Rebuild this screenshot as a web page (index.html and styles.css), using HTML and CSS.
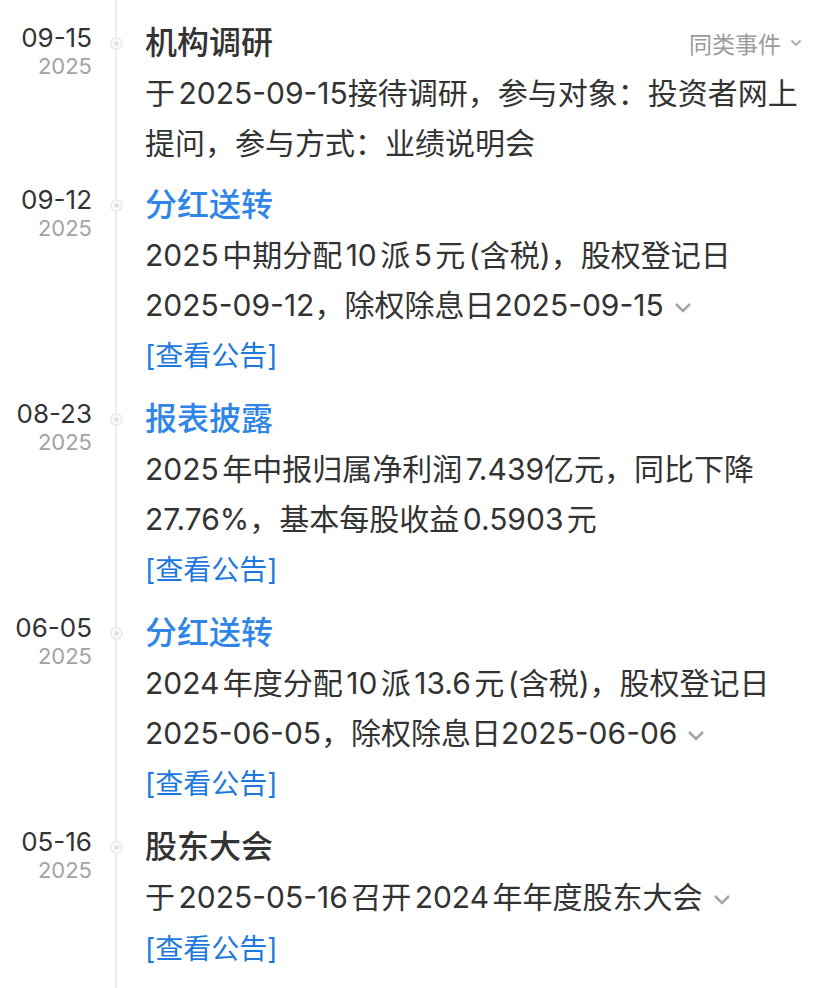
FILE: index.html
```html
<!DOCTYPE html>
<html lang="zh-CN">
<head>
  <meta charset="UTF-8" />
  <meta name="viewport" content="width=device-width, initial-scale=1.0"/>
  <title>大事提醒</title>
  <link rel="stylesheet" href="styles.css">
</head>
<body>

<div class="timeline">

  <div class="item">
    <div class="date"><div class="md">09-15</div><div class="yr">2025</div></div>
    <div class="axis"><span class="dot"></span></div>
    <div class="content">
      <div class="title-row">
        <div class="title">机构调研</div>
        <div class="filter">同类事件<svg class="chev-sm" viewBox="0 0 12 8"><path d="M1.5 1.5 L6 6 L10.5 1.5"/></svg></div>
      </div>
      <div class="desc">于 2025-09-15接待调研，参与对象：投资者网上提问，参与方式：业绩说明会</div>
    </div>
  </div>

  <div class="item">
    <div class="date"><div class="md">09-12</div><div class="yr">2025</div></div>
    <div class="axis"><span class="dot"></span></div>
    <div class="content">
      <div class="title blue">分红送转</div>
      <div class="desc">2025 中期分配 10 派 5 元 (含税)，股权登记日 2025-09-12，除权除息日2025-09-15<svg class="chev" viewBox="0 0 18 11"><path d="M2 2 L9 9 L16 2"/></svg></div>
      <a class="link" href="#">[查看公告]</a>
    </div>
  </div>

  <div class="item">
    <div class="date"><div class="md">08-23</div><div class="yr">2025</div></div>
    <div class="axis"><span class="dot"></span></div>
    <div class="content">
      <div class="title blue">报表披露</div>
      <div class="desc">2025 年中报归属净利润 7.439亿元，同比下降 27.76%，基本每股收益 0.5903 元</div>
      <a class="link" href="#">[查看公告]</a>
    </div>
  </div>

  <div class="item">
    <div class="date"><div class="md">06-05</div><div class="yr">2025</div></div>
    <div class="axis"><span class="dot"></span></div>
    <div class="content">
      <div class="title blue">分红送转</div>
      <div class="desc">2024 年度分配 10 派 13.6 元 (含税)，股权登记日 2025-06-05，除权除息日2025-06-06<svg class="chev" viewBox="0 0 18 11"><path d="M2 2 L9 9 L16 2"/></svg></div>
      <a class="link" href="#">[查看公告]</a>
    </div>
  </div>

  <div class="item">
    <div class="date"><div class="md">05-16</div><div class="yr">2025</div></div>
    <div class="axis"><span class="dot"></span></div>
    <div class="content">
      <div class="title">股东大会</div>
      <div class="desc">于 2025-05-16 召开 2024 年年度股东大会<svg class="chev" viewBox="0 0 18 11"><path d="M2 2 L9 9 L16 2"/></svg></div>
      <a class="link" href="#">[查看公告]</a>
    </div>
  </div>

</div>

</body>
</html>
```

FILE: styles.css
```css
* { box-sizing: border-box; }

body {
  margin: 0;
  background: #fff;
  font-family: Inter, "Noto Sans CJK SC", sans-serif;
  color: #333;
  overflow: hidden;
}

/* vertical axis line running the whole page */
.timeline {
  min-height: 988px;
  padding-top: 17px;
  background: linear-gradient(#ededed, #ededed) no-repeat 115px 0 / 2px 100%;
}

.item {
  display: flex;
  padding-bottom: 11px;
}

.date {
  width: 92px;
  flex-shrink: 0;
  text-align: right;
  padding-top: 6px;
}

.md {
  font-size: 26px;
  line-height: 30px;
  color: #333;
}

.yr {
  font-size: 22px;
  line-height: 26px;
  color: #a3a3a3;
}

.axis {
  width: 48px;
  flex-shrink: 0;
  display: flex;
  justify-content: center;
  padding-top: 20px;
}

.dot {
  width: 13px;
  height: 13px;
  border-radius: 50%;
  border: 2px solid #ececec;
  background: #fff;
  display: flex;
  align-items: center;
  justify-content: center;
}

.dot::after {
  content: "";
  width: 5px;
  height: 5px;
  border-radius: 50%;
  background: #e2e2e2;
}

.content {
  flex: 1;
  padding-left: 5px;
  padding-right: 22px;
}

.title-row {
  display: flex;
  justify-content: space-between;
  align-items: center;
}

.title {
  font-size: 32px;
  line-height: 52px;
  font-weight: 500;
  color: #333;
}

.title.blue { color: #2f86e6; }

.filter {
  font-size: 23px;
  color: #9b9b9b;
  display: flex;
  align-items: center;
  padding-right: 4px;
}

.chev-sm {
  width: 12px;
  height: 8px;
  margin-left: 9px;
  fill: none;
  stroke: #a8a8a8;
  stroke-width: 1.8;
}

.desc {
  font-size: 30px;
  line-height: 49.5px;
  word-spacing: -5px;
  color: #333;
}

.chev {
  width: 18px;
  height: 11px;
  margin-left: 10px;
  fill: none;
  stroke: #a6a6a6;
  stroke-width: 2.6;
  vertical-align: 3px;
}

.link {
  display: block;
  font-size: 28px;
  line-height: 52px;
  color: #1e79dc;
  text-decoration: none;
}
```
